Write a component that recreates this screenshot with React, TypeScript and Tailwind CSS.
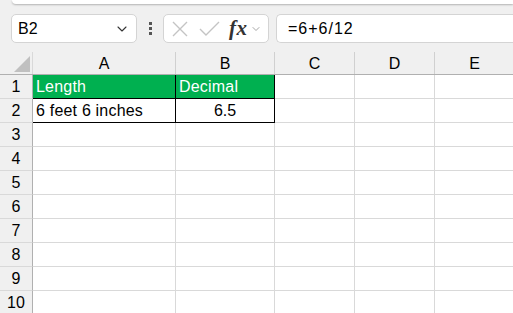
import { ChevronDown } from 'lucide-react'

const COLS = [
  { name: 'A', w: 'w-[143px]' },
  { name: 'B', w: 'w-[99px]' },
  { name: 'C', w: 'w-[80px]' },
  { name: 'D', w: 'w-[80px]' },
  { name: 'E', w: 'w-[80px]' },
]
const ROWS = [1, 2, 3, 4, 5, 6, 7, 8, 9, 10]

const font = { fontFamily: '"Liberation Sans", Arial, sans-serif' }

function Cell({ row, col }: { row: number; col: number }) {
  const w = COLS[col].w
  if (row === 1 && col < 2) {
    return (
      <div className={`${w} h-[24px] shrink-0 bg-[#00b050] text-white flex items-center px-[3px] text-[16px] leading-none tracking-[0.2px] border-r border-b border-black`}>
        {col === 0 ? 'Length' : 'Decimal'}
      </div>
    )
  }
  if (row === 2 && col === 0) {
    return <div className={`${w} h-[24px] shrink-0 border-r border-b border-black flex items-center px-[3px] text-[16px] tracking-[0.2px] text-black`}>6 feet 6 inches</div>
  }
  if (row === 2 && col === 1) {
    return <div className={`${w} h-[24px] shrink-0 border-r border-b border-black flex items-center justify-center text-[16px] text-black`}>6.5</div>
  }
  return <div className={`${w} h-[24px] shrink-0 border-r border-b border-[#d9d9d9]`} />
}

export default function App() {
  return (
    <div className="w-[513px] h-[313px] overflow-hidden bg-[#f0f0f0] text-black" style={font}>
      <div className="ml-[12px] h-[4px] bg-white rounded-bl-[6px] shadow-[0_1px_2px_rgba(0,0,0,0.25)]" />
      <div className="flex items-center h-[29px] mt-[10px]">
        <div className="ml-[11px] w-[126px] h-[29px] bg-white border border-[#d4d4d4] rounded-[5px] flex items-center pl-[6px] pr-[6px]">
          <span className="text-[16px] flex-1">B2</span>
          <ChevronDown size={16} strokeWidth={1.6} className="text-[#333]" />
        </div>
        <div className="w-[26px] flex flex-col items-center gap-[2px]">
          <span className="w-[3px] h-[3px] bg-[#555]" />
          <span className="w-[3px] h-[3px] bg-[#555]" />
          <span className="w-[3px] h-[3px] bg-[#555]" />
        </div>
        <div className="w-[106px] h-[29px] bg-white border border-[#d4d4d4] rounded-[5px] flex items-center pl-[7px]">
          <svg width="18" height="18" viewBox="0 0 18 18" className="mr-[10px]">
            <path d="M2 2 L16 16 M16 2 L2 16" stroke="#c4c4c4" strokeWidth="1.4" fill="none" />
          </svg>
          <svg width="21" height="16" viewBox="0 0 21 16" className="mr-[9px]">
            <path d="M1 8 L7 14 L20 1" stroke="#c4c4c4" strokeWidth="1.4" fill="none" />
          </svg>
          <span className="italic font-semibold text-[21px] leading-none text-[#333] mr-[2px] tracking-[0.5px]" style={{ fontFamily: '"Liberation Serif", serif' }}>fx</span>
          <ChevronDown size={12} strokeWidth={1.5} className="text-[#888]" />
        </div>
        <div className="ml-[7px] flex-1 h-[29px] bg-white border border-r-0 border-[#d4d4d4] rounded-l-[5px] flex items-center pl-[11px] text-[16px] tracking-[1px]">
          =6+6/12
        </div>
      </div>
      <div className="mt-[9px]">
        <div className="flex h-[23px] border-b border-[#b0b0b0]">
          <div className="w-[33px] shrink-0 border-r border-[#d9d9d9] relative">
            <svg width="16" height="16" viewBox="0 0 16 16" className="absolute right-[2px] bottom-[2px]">
              <path d="M16 0 L16 16 L0 16 Z" fill="#c0c0c0" />
            </svg>
          </div>
          {COLS.map((c) => (
            <div key={c.name} className={`${c.w} shrink-0 border-r border-[#d0d0d0] flex items-center justify-center text-[16px] pt-[2px]`}>
              {c.name}
            </div>
          ))}
        </div>
        {ROWS.map((r) => (
          <div key={r} className="flex bg-white">
            <div className="w-[33px] h-[24px] shrink-0 bg-[#f0f0f0] border-r border-b border-r-[#b0b0b0] border-b-[#d9d9d9] flex items-center justify-center text-[16px]">
              {r}
            </div>
            {COLS.map((c, i) => (
              <Cell key={c.name} row={r} col={i} />
            ))}
          </div>
        ))}
      </div>
    </div>
  )
}
